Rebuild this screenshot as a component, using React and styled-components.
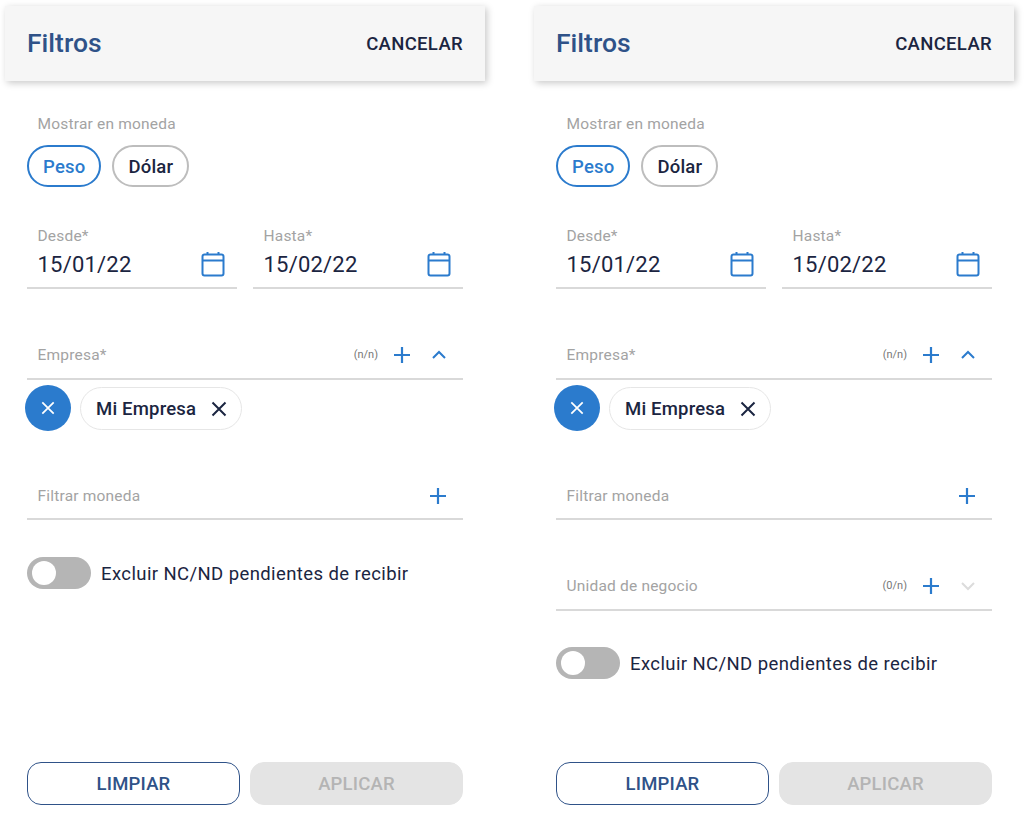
import React from 'react'
import styled, { createGlobalStyle } from 'styled-components'

const Global = createGlobalStyle`
  html, body {
    margin: 0;
    background: #fff;
  }
  body {
    font-family: Roboto, "Liberation Sans", sans-serif;
    color: #1b2541;
  }
`

const Page = styled.div`
  display: flex;
  gap: 49px;
  padding-left: 5px;
  width: 1024px;
  height: 826px;
  box-sizing: border-box;
  overflow: hidden;
`

const Panel = styled.section`
  width: 480px;
  height: 826px;
  display: flex;
  flex-direction: column;
  padding-top: 6px;
  box-sizing: border-box;
`

const Header = styled.header`
  height: 75px;
  flex: none;
  background: #f6f6f6;
  box-shadow: 2px 2px 7px rgba(0, 0, 0, 0.22);
  display: flex;
  align-items: center;
  justify-content: space-between;
  padding: 0 22px;
`

const Title = styled.h2`
  margin: 0;
  padding-bottom: 2px;
  font-size: 26.5px;
  font-weight: 500;
  color: #2f5288;
`

const Cancel = styled.span`
  font-size: 18.5px;
  font-weight: 500;
  letter-spacing: 0.35px;
`

const Body = styled.div`
  flex: 1;
  display: flex;
  flex-direction: column;
  padding: 0 22px 21px;
`

const Label = styled.div`
  font-size: 15.5px;
  line-height: 18px;
  color: #a3a3a3;
  letter-spacing: 0.2px;
  padding-left: 10.5px;
`

const CurrencyLabel = styled(Label)`
  margin-top: 34px;
`

const Pills = styled.div`
  display: flex;
  gap: 11px;
  margin-top: 12px;
`

const Pill = styled.div`
  height: 42px;
  box-sizing: border-box;
  padding: 1px 14px 0;
  border-radius: 21px;
  border: ${(p) => (p.$active ? '2px solid #2b7bcd' : '2px solid #bdbdbd')};
  color: ${(p) => (p.$active ? '#2b7bcd' : '#1b2541')};
  font-size: 18.5px;
  font-weight: 500;
  letter-spacing: 0.2px;
  display: flex;
  align-items: center;
`

const Dates = styled.div`
  display: grid;
  grid-template-columns: 210px 210px;
  gap: 16px;
  margin-top: 40px;
`

const DateField = styled.div`
  border-bottom: 2px solid #d9d9d9;
  height: 62px;
  box-sizing: border-box;
  position: relative;
`

const DateValue = styled.div`
  padding-left: 10.5px;
  font-size: 22px;
  line-height: 26px;
  letter-spacing: 0.2px;
  margin-top: 7px;
`

const CalendarSlot = styled.span`
  position: absolute;
  right: 12px;
  top: 24px;
  display: flex;
`

const SelectRow = styled.div`
  height: ${(p) => p.$height || 44}px;
  margin-top: ${(p) => p.$top}px;
  flex: none;
  box-sizing: border-box;
  border-bottom: 2px solid #d9d9d9;
  display: flex;
  align-items: center;
  padding: 0 16px ${(p) => p.$bottom ?? 5}px 0;
`

const SelectLabel = styled(Label)`
  flex: 1;
`

const Count = styled.span`
  font-size: 11px;
  color: #777;
  margin-right: 15px;
`

const IconSlot = styled.span`
  display: flex;
  margin-left: ${(p) => p.$left || 0}px;
`

const Chips = styled.div`
  display: flex;
  align-items: center;
  gap: 9px;
  margin: 5px 0 0 -2px;
`

const ClearAll = styled.div`
  width: 46px;
  height: 46px;
  border-radius: 50%;
  background: #2b7bcd;
  display: flex;
  align-items: center;
  justify-content: center;
`

const Chip = styled.div`
  height: 43px;
  box-sizing: border-box;
  border: 1.5px solid #e6e6e6;
  border-radius: 22px;
  padding: 1px 14px 0 15px;
  display: flex;
  align-items: center;
  gap: 15px;
  font-size: 18.5px;
  font-weight: 500;
  letter-spacing: 0.2px;
`

const ToggleRow = styled.div`
  display: flex;
  align-items: center;
  gap: 10px;
  margin-top: ${(p) => p.$top}px;
`

const Track = styled.div`
  width: 64px;
  height: 32px;
  border-radius: 16px;
  background: #b5b5b5;
  display: flex;
  align-items: center;
  padding-left: 5px;
  box-sizing: border-box;
`

const Knob = styled.div`
  width: 24px;
  height: 24px;
  border-radius: 50%;
  background: #fff;
`

const ToggleText = styled.span`
  padding-top: 2px;
  font-size: 18.5px;
  letter-spacing: 0.4px;
`

const Footer = styled.div`
  margin-top: auto;
  display: grid;
  grid-template-columns: 213px 213px;
  gap: 10px;
`

const Button = styled.div`
  height: 43px;
  box-sizing: border-box;
  border-radius: 14px;
  border: 1.5px solid ${(p) => (p.$disabled ? '#e4e4e4' : '#2f5288')};
  background: ${(p) => (p.$disabled ? '#e4e4e4' : '#fff')};
  color: ${(p) => (p.$disabled ? '#b4b4b4' : '#2f5288')};
  font-size: 18.5px;
  font-weight: 500;
  letter-spacing: 0.2px;
  display: flex;
  align-items: center;
  justify-content: center;
`

const Calendar = () => (
  <svg width="24" height="26" viewBox="0 0 24 26" fill="none" stroke="#2b7bcd" strokeWidth="2">
    <rect x="1.5" y="3.5" width="21" height="21" rx="2" />
    <path d="M1.5 9.5h21M6.5 1v3M17.5 1v3" />
  </svg>
)

const Plus = () => (
  <svg width="18" height="18" viewBox="0 0 18 18" stroke="#2b7bcd" strokeWidth="2.2">
    <path d="M9 1v16M1 9h16" />
  </svg>
)

const Chevron = ({ up, color = '#2b7bcd' }) => (
  <svg width="16" height="10" viewBox="0 0 16 10" fill="none" stroke={color} strokeWidth="2">
    <path d={up ? 'M2 8l6-6 6 6' : 'M2 2l6 6 6-6'} />
  </svg>
)

const Cross = ({ size = 16, color = '#1b2541', width = 2 }) => (
  <svg width={size} height={size} viewBox="0 0 16 16" stroke={color} strokeWidth={width}>
    <path d="M1.5 1.5l13 13M14.5 1.5l-13 13" />
  </svg>
)

const DateInput = ({ label, value }) => (
  <DateField>
    <Label>{label}</Label>
    <DateValue>{value}</DateValue>
    <CalendarSlot>
      <Calendar />
    </CalendarSlot>
  </DateField>
)

const FilterPanel = ({ showUnit }) => (
  <Panel>
    <Header>
      <Title>Filtros</Title>
      <Cancel>CANCELAR</Cancel>
    </Header>
    <Body>
      <CurrencyLabel>Mostrar en moneda</CurrencyLabel>
      <Pills>
        <Pill $active>Peso</Pill>
        <Pill>Dólar</Pill>
      </Pills>
      <Dates>
        <DateInput label="Desde*" value="15/01/22" />
        <DateInput label="Hasta*" value="15/02/22" />
      </Dates>
      <SelectRow $top={47}>
        <SelectLabel>Empresa*</SelectLabel>
        <Count>(n/n)</Count>
        <Plus />
        <IconSlot $left={20}>
          <Chevron up />
        </IconSlot>
      </SelectRow>
      <Chips>
        <ClearAll>
          <Cross color="#fff" size={14} />
        </ClearAll>
        <Chip>
          Mi Empresa
          <Cross />
        </Chip>
      </Chips>
      <SelectRow $top={43} $height={46} $bottom={1}>
        <SelectLabel>Filtrar moneda</SelectLabel>
        <Plus />
      </SelectRow>
      {showUnit && (
        <SelectRow $top={45} $height={46} $bottom={3}>
          <SelectLabel>Unidad de negocio</SelectLabel>
          <Count>(0/n)</Count>
          <Plus />
          <IconSlot $left={20}>
            <Chevron color="#dcdcdc" />
          </IconSlot>
        </SelectRow>
      )}
      <ToggleRow $top={showUnit ? 36 : 37}>
        <Track>
          <Knob />
        </Track>
        <ToggleText>Excluir NC/ND pendientes de recibir</ToggleText>
      </ToggleRow>
      <Footer>
        <Button>LIMPIAR</Button>
        <Button $disabled>APLICAR</Button>
      </Footer>
    </Body>
  </Panel>
)

export default function App() {
  return (
    <>
      <Global />
      <Page>
        <FilterPanel />
        <FilterPanel showUnit />
      </Page>
    </>
  )
}
